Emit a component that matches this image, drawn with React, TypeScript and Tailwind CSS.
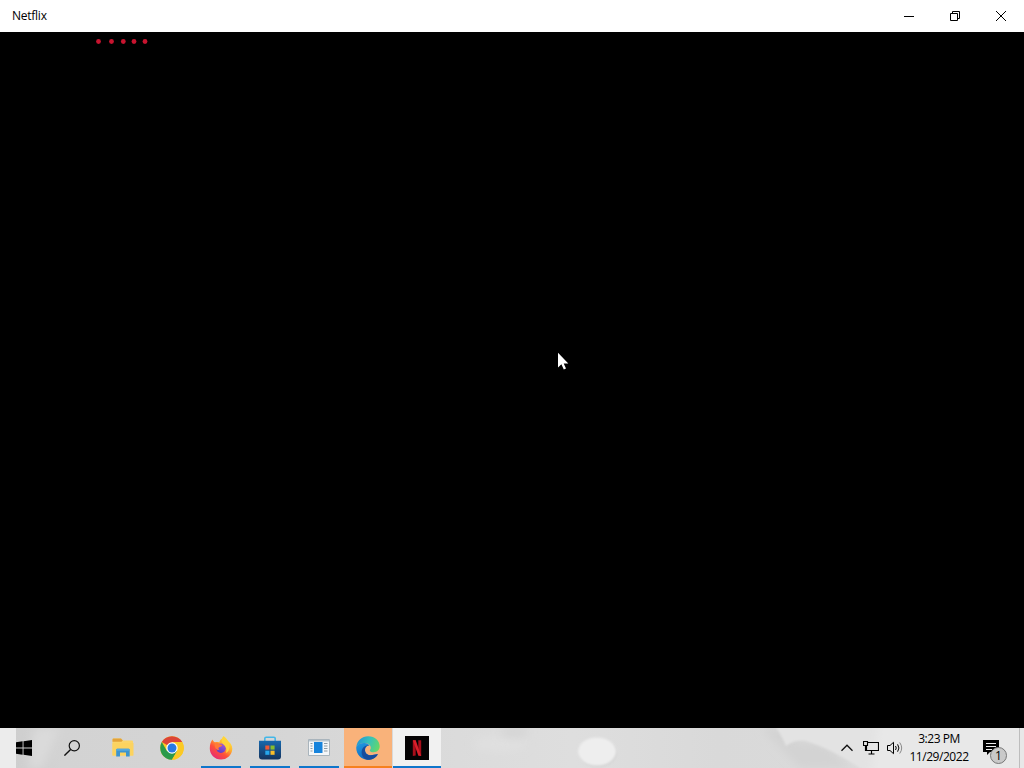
import type { ReactNode } from 'react';

const loadingDots = [98.5, 111.5, 123.3, 134, 145];

const StartIcon = () => (
  <svg width="16" height="16" viewBox="0 0 16 16" fill="#000">
    <path d="M0 2.3 6.6 1.3V7.5H0ZM7.5 1.2 16 0V7.5H7.5ZM0 8.5H6.6V14.7L0 13.7ZM7.5 8.5H16V16L7.5 14.8Z" />
  </svg>
);

const SearchIcon = () => (
  <svg width="16" height="16" viewBox="0 0 16 16" fill="none" stroke="#111" strokeWidth="1.2">
    <circle cx="10.3" cy="5.7" r="5.1" />
    <path d="M6.6 9.4.4 15.6" strokeWidth="1.4" />
  </svg>
);

const FolderIcon = () => (
  <svg width="24" height="20" viewBox="0 0 24 20">
    <path d="M1.5 1.5q0-1 1-1H10l2 2H21q1 0 1 1V17.5H1.5Z" fill="#fbd568" />
    <path d="M1.5 3V1.5q0-1 1-1H10l1.8 2-1.3 1.2H1.5Z" fill="#e3a33a" />
    <path d="M1.5 5H22.5V17.5H1.5Z" fill="#fcd35f" />
    <path d="M5.2 18.5V12q0-1.2 1.2-1.2H17.5q1.2 0 1.2 1.2V18.5H15V14.6H9V18.5Z" fill="#3c94cf" />
    <path d="M5.2 12q0-1.2 1.2-1.2H17.5q1.2 0 1.2 1.2v.8H5.2Z" fill="#55a9de" />
  </svg>
);

const ChromeIcon = () => (
  <svg width="24" height="24" viewBox="0 0 24 24">
    <circle cx="12" cy="12" r="11.8" fill="#fbc924" />
    <path d="M12 12 1.8 6.1A11.8 11.8 0 0 1 22.2 6.1H12Z" fill="#dc4437" />
    <path d="M1.8 6.1A11.8 11.8 0 0 0 12 23.8L17.1 15 12 12 6.9 15Z" fill="#2b9a4b" />
    <path d="M12 23.8A11.8 11.8 0 0 0 22.2 6.1H12l5.1 8.9Z" fill="#fbc924" />
    <circle cx="12" cy="12" r="5.7" fill="#fff" />
    <circle cx="12" cy="12" r="4.5" fill="#2879e4" />
  </svg>
);

const FirefoxIcon = () => (
  <svg width="24" height="24" viewBox="0 0 24 24">
    <defs>
      <linearGradient id="fox" x1=".85" y1=".05" x2=".2" y2=".95">
        <stop offset="0" stopColor="#fff04a" />
        <stop offset=".35" stopColor="#ffb52e" />
        <stop offset=".65" stopColor="#ff5038" />
        <stop offset="1" stopColor="#e52a77" />
      </linearGradient>
      <linearGradient id="globe" x1=".7" y1="0" x2=".3" y2="1">
        <stop offset="0" stopColor="#a45ad8" />
        <stop offset="1" stopColor="#5b3cc4" />
      </linearGradient>
    </defs>
    <path d="M3.5 3.5C4 5 5 6 6 6.3 7.5 6 9 6 10.3 6.4 10.8 4.5 12 3 13.4 2.3L14.5.3C16 1 17.7 3 18.5 4.7c2.7 1.6 4.8 4.3 4.8 8A11.2 11.2 0 0 1 12 23.5C5.5 23.5.8 18.5.8 12.5.8 8.5 1.8 5.5 3.5 3.5Z" fill="url(#fox)" />
    <circle cx="12" cy="12.2" r="4.8" fill="url(#globe)" />
    <path d="M5.8 7.8C7.5 6.5 9.5 7 10.5 8.2l2.9.7c-.6 1.500-2 1.900-3.400 2.300-.9.800-.6 2 .4 2.900-3.200.3-5.100-2.900-4.600-6.300Z" fill="#ff7b36" />
    <path d="M14.5.3c3.500 2.500 6.500 6.700 6 11.200-.3 3-1.800 4.500-3.700 5.500 1.700-4-.2-6.800-2.300-8.500-2-1.700-2.500-5.500 0-8.200Z" fill="#ffd43a" />
  </svg>
);

const StoreIcon = () => (
  <svg width="24" height="24" viewBox="0 0 24 24">
    <defs>
      <linearGradient id="bag" x1="0" y1="0" x2="0" y2="1">
        <stop offset="0" stopColor="#1768ad" />
        <stop offset="1" stopColor="#15345f" />
      </linearGradient>
    </defs>
    <path d="M6.8 6V2.6q0-1.300 1.300-1.300h7.800q1.300 0 1.300 1.300V6" fill="none" stroke="#43b7e8" strokeWidth="1.6" />
    <path d="M1 4.8H23V20.5q0 3-3 3H4q-3 0-3-3Z" fill="url(#bag)" />
    <path d="M7.3 9.5h4.100v4.100H7.300Z" fill="#ed5935" />
    <path d="M12.5 9.5h4.100v4.100h-4.100Z" fill="#86bd2d" />
    <path d="M7.3 14.7h4.100v4.100H7.300Z" fill="#27a7ec" />
    <path d="M12.5 14.7h4.100v4.100h-4.100Z" fill="#fbbd2a" />
  </svg>
);

const WindowIcon = () => (
  <svg width="22" height="18" viewBox="0 0 22 18">
    <path d="M.5.5h21v16H.5Z" fill="#f4f6f8" stroke="#a9b4bc" />
    <path d="M1 1h20v1.500H1Z" fill="#b7c4ce" />
    <path d="M6 3h8.500V14H6Z" fill="#1683dc" />
    <path d="M2.500 4.500h2M2.500 7h2M2.500 9.500h2M2.500 12h2M16 4.500h3.500M16 7h3.500M16 9.500h3.500M16 12h3.500" stroke="#8c9aa4" />
  </svg>
);

const EdgeIcon = () => (
  <svg width="24" height="24" viewBox="0 0 24 24">
    <defs>
      <linearGradient id="edgeTop" x1="0" y1=".3" x2="1" y2=".6">
        <stop offset="0" stopColor="#2293d6" />
        <stop offset=".5" stopColor="#35c2bb" />
        <stop offset="1" stopColor="#66d867" />
      </linearGradient>
      <linearGradient id="edgeLeft" x1=".2" y1="0" x2=".6" y2="1">
        <stop offset="0" stopColor="#1f97e0" />
        <stop offset="1" stopColor="#0f63bb" />
      </linearGradient>
    </defs>
    <path d="M.3 11C1 4.5 6 .2 12.2.2 19 .2 23.7 5 23.7 10.3c0 3.500-2.500 5.900-5.900 5.900-3 0-4-1-4-1.800 0-.7 1-1 1-2.700 0-2.500-2.600-4.700-6.300-4.700C4.500 7 1.500 8.800.3 11Z" fill="url(#edgeTop)" />
    <path d="M.3 11C1.500 8.200 5 6.800 8.500 7c2.200.1 4.300 1.300 5.200 2.700C10.500 9 9 11.500 9 14c0 4.500 4.500 6.200 9 4.800 1.600-.5 2.900-.8 3.900-.5C20 21.500 16.500 23.800 12 23.800 5 23.800-.3 18 .3 11Z" fill="url(#edgeLeft)" />
    <path d="M10.500 23.600C7 22 5.600 19.500 5.600 16.200c0-3 1.400-5.200 3.800-6.300 1.500-.6 3.300-.8 4.300-.2C10.500 9 9 11.500 9 14c0 4.500 4.500 6.200 9 4.800 1.600-.5 2.900-.8 3.900-.5-2.200 4-6.600 6.300-11.400 5.300Z" fill="#174c9c" />
  </svg>
);

const NetflixIcon = () => (
  <svg width="24" height="24" viewBox="0 0 24 24">
    <path d="M0 0h24v24H0Z" fill="#050304" />
    <path d="M7.800 4.300h2.900v15.200l-2.900.4ZM13.300 4.300h2.900v15.600l-2.900-.4Z" fill="#a90e1a" />
    <path d="M7.800 4.300h2.900l5.500 15.600-2.900-.4Z" fill="#d81f2b" />
  </svg>
);

const apps: { name: string; icon: ReactNode; tile: string; bar: string }[] = [
  { name: 'File Explorer', icon: <FolderIcon />, tile: '', bar: '' },
  { name: 'Chrome', icon: <ChromeIcon />, tile: '', bar: '' },
  { name: 'Firefox', icon: <FirefoxIcon />, tile: '', bar: 'w-10 bg-[#0f76cb]' },
  { name: 'Store', icon: <StoreIcon />, tile: '', bar: 'w-10 bg-[#0f76cb]' },
  { name: 'Window', icon: <WindowIcon />, tile: '', bar: 'w-10 bg-[#0f76cb]' },
  { name: 'Edge', icon: <EdgeIcon />, tile: 'bg-[#f9b27a]', bar: 'w-full bg-[#f6801f]' },
  { name: 'Netflix', icon: <NetflixIcon />, tile: 'bg-[#f1f1f1]', bar: 'w-full bg-[#0f76cb]' },
];

// Blurred wallpaper that shows through the taskbar
const TaskbarBackdrop = () => (
  <svg className="absolute inset-0" width="1024" height="40" viewBox="0 0 1024 40">
    <defs>
      <linearGradient id="base">
        <stop offset="0" stopColor="#cdcdcd" />
        <stop offset=".06" stopColor="#d3d3d3" />
        <stop offset=".25" stopColor="#d5d5d5" />
        <stop offset=".48" stopColor="#dcdcdc" />
        <stop offset=".56" stopColor="#dedede" />
        <stop offset=".7" stopColor="#d9d9d9" />
        <stop offset="1" stopColor="#dcdcdc" />
      </linearGradient>
      <filter id="soft" x="-50%" y="-100%" width="200%" height="300%">
        <feGaussianBlur stdDeviation="4" />
      </filter>
      <filter id="edge" x="-20%" y="-20%" width="140%" height="140%">
        <feGaussianBlur stdDeviation=".8" />
      </filter>
    </defs>
    <path d="M0 0h1024v40H0Z" fill="url(#base)" />
    <path d="M0 0h16v40H0Z" fill="#ececec" />
    <path d="M34 0h26L42 40H28Z" fill="#dadada" filter="url(#soft)" />
    <ellipse cx="500" cy="16" rx="26" ry="7" fill="#e0e0e0" filter="url(#soft)" />
    <ellipse cx="514" cy="4" rx="14" ry="6" fill="#d5d5d5" filter="url(#soft)" />
    <ellipse cx="598" cy="25" rx="19" ry="14" fill="#d4d4d4" filter="url(#edge)" />
    <ellipse cx="597" cy="23.5" rx="19" ry="14" fill="#eee" filter="url(#edge)" />
    <path d="M762 0h20l16 14 26 2 26 24H800L774 14Z" fill="#d3d3d3" filter="url(#soft)" />
    <path d="M774-4h260v50H868Q836 22 806 13 796 11 786 18 782 8 774-4Z" fill="#e3e3e3" filter="url(#edge)" />
    <path d="M880-14h160v68H870Z" fill="#e8e8e8" filter="url(#soft)" />
  </svg>
);

const TitleBar = () => (
  <header className="flex h-8 items-center justify-between bg-white">
    <span className="pl-3 text-[12px] leading-4 tracking-[-0.25px] text-black">Netflix</span>
    <div className="flex h-full">
      <div className="flex w-[46px] items-center justify-center">
        <svg width="10" height="10" viewBox="0 0 10 10" fill="#000">
          <path d="M0 5h10v1H0Z" />
        </svg>
      </div>
      <div className="flex w-[46px] items-center justify-center">
        <svg width="10" height="10" viewBox="0 0 10 10" fill="none" stroke="#000">
          <path d="M.5 2.500h7v7h-7ZM2.500 2.500v-2h7v7h-2" />
        </svg>
      </div>
      <div className="flex w-[46px] items-center justify-center">
        <svg width="10" height="10" viewBox="0 0 10 10" fill="none" stroke="#000">
          <path d="M0 0 10 10M10 0 0 10" />
        </svg>
      </div>
    </div>
  </header>
);

const Taskbar = () => (
  <footer className="relative h-10 overflow-hidden">
    <TaskbarBackdrop />
    <div className="relative flex h-full">
      <div className="flex w-12 items-center justify-center"><StartIcon /></div>
      <div className="mr-[3px] flex w-12 items-center justify-center"><SearchIcon /></div>
      <div className="flex gap-px">
        {apps.map((app) => (
          <div key={app.name} className={`flex w-12 flex-col items-center ${app.tile}`}>
            <div className="flex h-[38px] items-center justify-center pt-0.5">{app.icon}</div>
            <div className={`h-0.5 ${app.bar}`} />
          </div>
        ))}
      </div>

      {/* System tray */}
      <div className="ml-auto flex h-full items-center">
        <svg className="mr-[10px]" width="12" height="8" viewBox="0 0 12 8" fill="none" stroke="#111" strokeWidth="1.3">
          <path d="m.5 6.700 5.500-5.500 5.500 5.500" />
        </svg>
        <svg className="mr-2" width="16" height="14" viewBox="0 0 16 14" fill="none" stroke="#000" strokeWidth="1.15">
          <path d="M5 1.500h10.500v8H3.500V5M8.500 9.500v3.500M5.500 13h6" />
          <path d="M.5.500h4v4h-4ZM2.500 4.500v5h1" />
        </svg>
        <svg className="mr-[5px]" width="16" height="14" viewBox="0 0 16 14" fill="none" stroke="#000">
          <path d="M.5 4.500H3L6.500 1.300v11.400L3 9.500H.5Z" />
          <path d="M8.500 5q1.500 2 0 4M10.600 3.300q2.700 3.700 0 7.400" />
          <path d="M12.700 1.500q4 5.500 0 11" stroke="#888" />
        </svg>
        <div className="w-[62px] text-center text-[12px] leading-[18px] tracking-[-0.45px] whitespace-nowrap text-black">
          <div>3:23 PM</div>
          <div>11/29/2022</div>
        </div>
        <div className="relative ml-[13px] h-10 w-[36px]">
          <svg className="mt-3" width="16" height="16" viewBox="0 0 16 16">
            <path d="M0 0h16v12H7l-3 3v-3H0Z" fill="#000" />
            <path d="M3 3.500h10M3 6.500h10M3 9.500h6" stroke="#eee" />
          </svg>
          <div className="absolute top-[19px] left-[7px] flex size-[17px] items-center justify-center rounded-full border border-[#777] bg-[#c9c9c9] text-[12px] leading-none text-black">
            1
          </div>
        </div>
        <div className="h-full w-[5px] border-l border-[#bdbdbd]" />
      </div>
    </div>
  </footer>
);

export default function App() {
  return (
    <div className="flex h-[768px] w-[1024px] flex-col overflow-hidden bg-black font-['Open_Sans','Noto_Sans',sans-serif]">
      <TitleBar />
      <main className="relative flex-1 bg-black">
        <svg className="block" width="1024" height="20" viewBox="0 0 1024 20">
          {loadingDots.map((x) => (
            <circle key={x} cx={x} cy="9.500" r="2.400" fill="#c8142f" />
          ))}
        </svg>
        <svg className="absolute top-[320px] left-[557px]" width="13" height="20" viewBox="0 0 13 20">
          <path d="M1 .8V15.500L4.400 12.300 6.800 17.500 9 16.500 6.700 11.500H11.300Z" fill="#fff" />
        </svg>
      </main>
      <Taskbar />
    </div>
  );
}
